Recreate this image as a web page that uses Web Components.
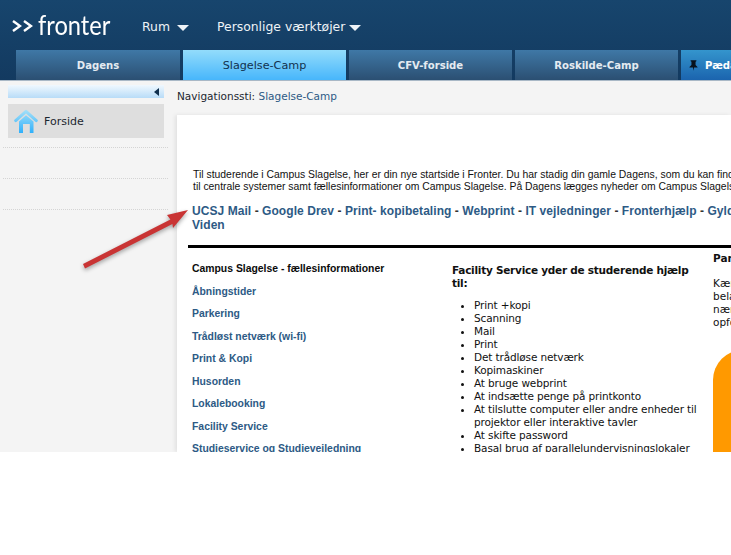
<!DOCTYPE html>
<html lang="da">
<head>
<meta charset="utf-8">
<title>Fronter</title>
<style>
  html, body { margin: 0; background: #fff; }
</style>
</head>
<body>
<fronter-app>
  <fronter-topbar slot="top">
    <fronter-menu style="--gap:7px">Rum</fronter-menu>
    <fronter-menu style="margin-left:28px;--gap:4px">Personlige værktøjer</fronter-menu>
    <fronter-tab slot="tabs" style="width:164px">Dagens</fronter-tab>
    <fronter-tab slot="tabs" active>Slagelse-Camp</fronter-tab>
    <fronter-tab slot="tabs">CFV-forside</fronter-tab>
    <fronter-tab slot="tabs">Roskilde-Camp</fronter-tab>
    <fronter-tab slot="tabs" pinned>Pædagogik</fronter-tab>
  </fronter-topbar>
  <fronter-sidebar slot="side"></fronter-sidebar>
  <fronter-crumb slot="main">Slagelse-Camp</fronter-crumb>
  <fronter-page slot="main"></fronter-page>
  <fronter-arrow slot="over"></fronter-arrow>
</fronter-app>

<script>
class FronterApp extends HTMLElement {
  constructor() {
    super();
    this.attachShadow({ mode: 'open' });
    this.shadowRoot.innerHTML = `
      <style>
        :host { display: block; position: relative; width: 731px; height: 452px; overflow: hidden; background: #f4f4f4; }
        .body { display: flex; align-items: stretch; height: 371px; }
        .side { display: block; flex: none; width: 177px; }
        .main { flex: none; width: 554px; display: flex; flex-direction: column; }
      </style>
      <slot name="top"></slot>
      <div class="body">
        <div class="side"><slot name="side"></slot></div>
        <div class="main"><slot name="main"></slot></div>
      </div>
      <slot name="over"></slot>`;
  }
}

class FronterTopbar extends HTMLElement {
  constructor() {
    super();
    this.attachShadow({ mode: 'open' });
    this.shadowRoot.innerHTML = `
      <style>
        :host { display: block; height: 81px; box-sizing: border-box; border-bottom: 1px solid #a9b8c6;
                background: linear-gradient(#17456d, #133a60); overflow: hidden; }
        .row { display: flex; align-items: center; height: 50px; padding: 3px 0 0 12px; box-sizing: border-box; }
        .logo { display: flex; align-items: center; width: 130px; color: #fff; }
        .arrows { display: flex; gap: 1px; margin-right: 5px; margin-top: -2px; }
        .word { display: inline-block; font: 400 26px/30px Lato, "Open Sans", sans-serif; transform: scaleX(.91); transform-origin: left center; margin-top: -4px; }
        .tabs { display: flex; gap: 3px; padding-left: 16px; width: 900px; }
      </style>
      <div class="row">
        <div class="logo">
          <span class="arrows">
            <svg width="10" height="14" viewBox="0 0 10 14"><path d="M1 2l7 5-7 5" fill="none" stroke="#fff" stroke-width="2.5"/></svg>
            <svg width="10" height="14" viewBox="0 0 10 14"><path d="M1 2l7 5-7 5" fill="none" stroke="#fff" stroke-width="2.5"/></svg>
          </span>
          <span class="word">fronter</span>
        </div>
        <slot></slot>
      </div>
      <div class="tabs"><slot name="tabs"></slot></div>`;
  }
}

class FronterMenu extends HTMLElement {
  constructor() {
    super();
    this.attachShadow({ mode: 'open' });
    this.shadowRoot.innerHTML = `
      <style>
        :host { display: inline-flex; align-items: center; gap: var(--gap, 6px); color: #eef3f7;
                font: 12.4px "DejaVu Sans", sans-serif; }
        i { display: block; width: 0; height: 0; margin-top: 2px; border: 6px solid transparent; border-top: 6px solid #eef3f7; border-bottom: 0; }
      </style>
      <slot></slot><i></i>`;
  }
}

class FronterTab extends HTMLElement {
  constructor() {
    super();
    this.attachShadow({ mode: 'open' });
    this.shadowRoot.innerHTML = `
      <style>
        :host { flex: none; display: flex; align-items: center; justify-content: center; gap: 7px;
                width: 163px; height: 30px; color: #e4ebf1; font: bold 10.1px "DejaVu Sans", sans-serif;
                background: linear-gradient(#3f78a6, #2b4f72); }
        :host([active]) { background: linear-gradient(#93dcfb, #47b6fb); color: #12324f; font: 11.2px "DejaVu Sans", sans-serif; }
        :host([pinned]) { justify-content: flex-start; padding-left: 8px; box-sizing: border-box; color: #fff;
                background: linear-gradient(#3495cd, #1b64ae); }
        svg { display: none; }
        :host([pinned]) svg { display: block; }
      </style>
      <svg width="9" height="13" viewBox="0 0 11 13"><path d="M2 0h7v1.3L8 2v4l2.4 2.2V9H6.2L5.5 13 4.8 9H.6v-.8L3 6V2L2 1.3z" fill="#08121c"/></svg>
      <slot></slot>`;
  }
}

class FronterSidebar extends HTMLElement {
  constructor() {
    super();
    this.attachShadow({ mode: 'open' });
    this.shadowRoot.innerHTML = `
      <style>
        :host { display: block; padding-top: 4px; }
        .bar { display: flex; align-items: center; justify-content: flex-end; height: 13px; margin-left: 8px; width: 156px;
               padding-right: 5px; box-sizing: border-box; background: linear-gradient(#f0f8fe, #b8dcf8); }
        .bar i { width: 0; height: 0; border: 4.5px solid transparent; border-right: 5px solid #10304e; border-left: 0; }
        .home { display: flex; align-items: center; gap: 6px; height: 34px; width: 156px; margin: 6px 0 0 8px; padding-left: 6px;
                box-sizing: border-box; background: #dedede; color: #1c2730; font: 11px "DejaVu Sans", sans-serif; }
        .rule { height: 30px; width: 165px; margin-left: 3px; border-bottom: 1px dotted #d4d4d4; }
        .rule.first { height: 9px; }
      </style>
      <div class="bar"><i></i></div>
      <div class="home">
        <svg width="24" height="24" viewBox="0 0 24 24">
          <defs><linearGradient id="h" gradientUnits="userSpaceOnUse" x1="0" y1="1" x2="0" y2="24"><stop offset="0" stop-color="#a4e0f8"/><stop offset="1" stop-color="#2fb0fb"/></linearGradient></defs>
          <path d="M1.7 11.6L12 2.3 22.3 11.6" fill="none" stroke="url(#h)" stroke-width="3" stroke-linecap="round" stroke-linejoin="round"/>
          <path d="M5 12.5L12 6.2 19.5 12.5V24H15.8V15H9V24H5Z" fill="url(#h)"/>
        </svg>
        <span>Forside</span>
      </div>
      <div class="rule first"></div>
      <div class="rule"></div>
      <div class="rule"></div>`;
  }
}

class FronterCrumb extends HTMLElement {
  constructor() {
    super();
    this.attachShadow({ mode: 'open' });
    this.shadowRoot.innerHTML = `
      <style>
        :host { display: block; height: 34px; box-sizing: border-box; padding-top: 8px; color: #1c2730;
                font: 10.5px/14px "DejaVu Sans", sans-serif; white-space: nowrap; }
        span { color: #2d5a85; }
      </style>
      Navigationssti: <span><slot></slot></span>`;
  }
}

class FronterLinkList extends HTMLElement {
  constructor() {
    super();
    this.attachShadow({ mode: 'open' });
    this.shadowRoot.innerHTML = `
      <style>
        :host { display: flex; flex-direction: column; gap: 9.9px; font: bold 10.4px/12.6px "Liberation Sans", sans-serif; color: #2d5a85; }
        ::slotted(b) { color: #0b0b0b; margin-bottom: .7px; }
      </style>
      <slot></slot>`;
  }
}

class FronterPage extends HTMLElement {
  constructor() {
    super();
    this.attachShadow({ mode: 'open' });
    this.shadowRoot.innerHTML = `
      <style>
        :host { display: block; flex: 1; box-sizing: border-box; background: #fff; padding: 54px 0 0 15px; overflow: hidden;
                box-shadow: -2px 0 4px rgba(0,0,0,.08); white-space: nowrap; color: #111; }
        .intro { font: 10.4px/12px "Liberation Sans", sans-serif; margin-left: 1px; }
        .links { font: bold 12px/14px "Liberation Sans", sans-serif; color: #2d5a85; margin-top: 11px; letter-spacing: .06px; }
        .links span { color: #333; }
        hr { border: 0; height: 3px; background: #000; margin: 13px 0 0 -4px; width: 560px; }
        .cols { display: grid; grid-template-columns: 260px 261px 200px; }
        .left { padding-top: 14.5px; }
        .mid { padding-top: 16px; font: 10.5px/13px "DejaVu Sans", sans-serif; letter-spacing: -.13px; white-space: normal; width: 252px; }
        .mid h4 { font: bold 10.5px/13px "DejaVu Sans", sans-serif; letter-spacing: -.25px; margin: 0 0 9px; color: #111; }
        .mid ul { margin: 0; padding-left: 22px; }
        .right { padding-top: 4px; font: 10.5px/13px "DejaVu Sans", sans-serif; }
        .right h4 { font: bold 10.5px/13px "DejaVu Sans", sans-serif; margin: 0 0 12px; }
        .box { width: 200px; height: 200px; border-radius: 30px; background: #ff9900; margin-top: 21px; }
      </style>
      <div class="intro">Til studerende i Campus Slagelse, her er din nye startside i Fronter. Du har stadig din gamle Dagens, som du kan finde<br>
      til centrale systemer samt fællesinformationer om Campus Slagelse. På Dagens lægges nyheder om Campus Slagelse</div>
      <div class="links">UCSJ Mail <span>-</span> Google Drev <span>-</span> Print- kopibetaling <span>-</span> Webprint <span>-</span> IT vejledninger <span>-</span> Fronterhjælp <span>-</span> Gyldendal<br>Viden</div>
      <hr>
      <div class="cols">
        <div class="left">
          <fronter-link-list>
            <b>Campus Slagelse - fællesinformationer</b>
            <span>Åbningstider</span>
            <span>Parkering</span>
            <span>Trådløst netværk (wi-fi)</span>
            <span>Print &amp; Kopi</span>
            <span>Husorden</span>
            <span>Lokalebooking</span>
            <span>Facility Service</span>
            <span>Studieservice og Studievejledning</span>
          </fronter-link-list>
        </div>
        <div class="mid">
          <h4>Facility Service yder de studerende hjælp til:</h4>
          <ul>
            <li>Print +kopi</li>
            <li>Scanning</li>
            <li>Mail</li>
            <li>Print</li>
            <li>Det trådløse netværk</li>
            <li>Kopimaskiner</li>
            <li>At bruge webprint</li>
            <li>At indsætte penge på printkonto</li>
            <li>At tilslutte computer eller andre enheder til projektor eller interaktive tavler</li>
            <li>At skifte password</li>
            <li>Basal brug af parallelundervisningslokaler</li>
          </ul>
        </div>
        <div class="right">
          <h4>Parkering</h4>
          Kære studerende<br>belastning<br>nære<br>opfordres
          <div class="box"></div>
        </div>
      </div>`;
  }
}

class FronterArrow extends HTMLElement {
  constructor() {
    super();
    this.attachShadow({ mode: 'open' });
    this.shadowRoot.innerHTML = `
      <style>
        :host { position: absolute; left: 78px; top: 205px; width: 116px; height: 70px; display: block; }
        svg { display: block; overflow: visible; filter: drop-shadow(0 2px 2px rgba(0,0,0,.35)); }
      </style>
      <svg width="116" height="70" viewBox="78 205 116 70">
        <path d="M188 210L167 215 170.4 219.5 83 264 85 268.5 172.4 224 173 228Z" fill="#c93434"/>
      </svg>`;
  }
}

customElements.define('fronter-app', FronterApp);
customElements.define('fronter-topbar', FronterTopbar);
customElements.define('fronter-menu', FronterMenu);
customElements.define('fronter-tab', FronterTab);
customElements.define('fronter-sidebar', FronterSidebar);
customElements.define('fronter-crumb', FronterCrumb);
customElements.define('fronter-link-list', FronterLinkList);
customElements.define('fronter-page', FronterPage);
customElements.define('fronter-arrow', FronterArrow);
</script>
</body>
</html>
